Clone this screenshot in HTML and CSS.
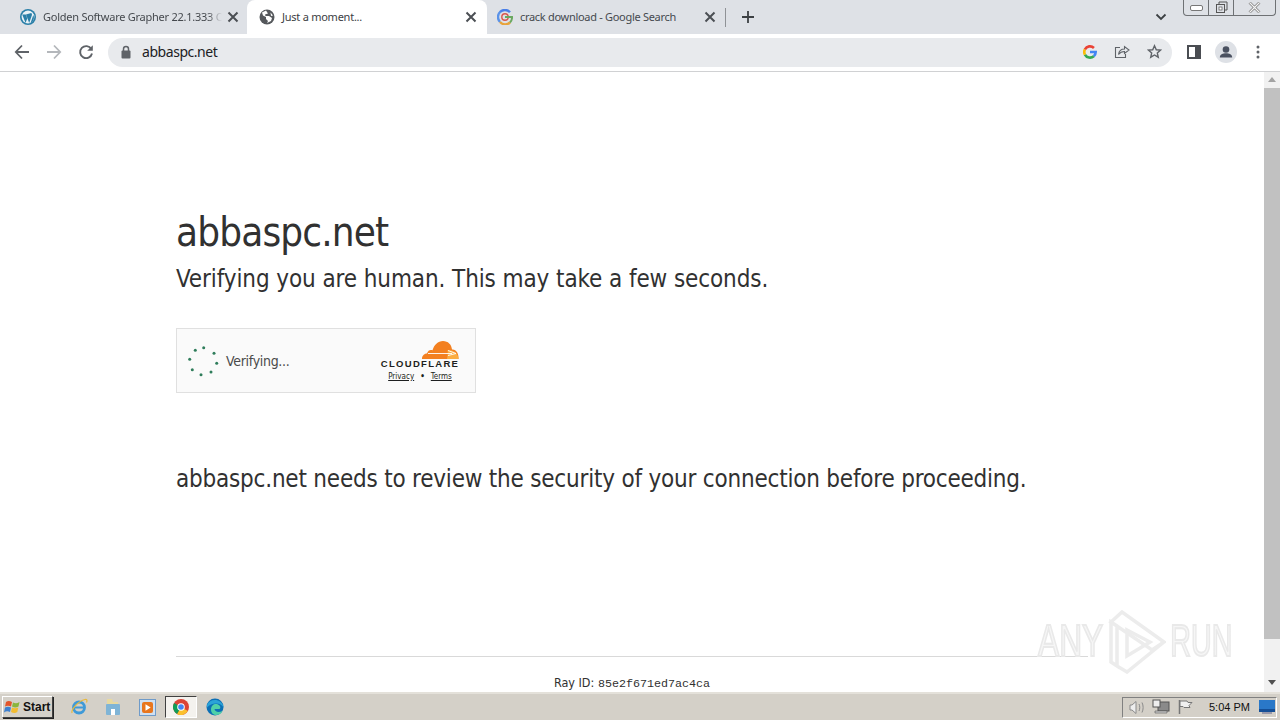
FILE: index.html
```html
<!DOCTYPE html>
<html lang="en">
<head>
  <meta charset="UTF-8" />
  <title>Just a moment...</title>
  <link rel="stylesheet" href="styles.css">
</head>
<body>
  <div class="tabstrip">
    <div class="tab tab-first">
      <svg class="favicon" viewBox="0 0 16 16"><circle cx="8" cy="8" r="8" fill="#2a7fa8"/><circle cx="8" cy="8" r="6.400" fill="#e9f2f7"/><path d="M2.200 5.500 5.600 14l1.600-4.600L5.800 5.500M6 5.500l3.200 8.600 2.600-7.600c.5-1.300 0-2-.6-2.600M13.300 6 10.500 14.200C13 13.400 15 9.500 13.300 6Z" fill="#2a7fa8"/></svg>
      <span class="tab-title">Golden Software Grapher 22.1.333 C</span>
      <svg class="tab-close" viewBox="0 0 16 16"><path d="m3.500 3.500 9 9m0-9-9 9" stroke="#4b4f54" stroke-width="2"/></svg>
    </div>
    <div class="tab tab-active">
      <svg class="favicon" viewBox="0 0 16 16"><circle cx="8" cy="8" r="7.500" fill="#55585c"/><path d="M7 1.500 3 3.500l1 3 3 1.500v2l2 2-1 2 4-2 1-3-3-2H6.500L6 5.500 9 4.500Z" fill="#fff"/><path d="M11.500 3.500 14 6.500l-2 .5Z" fill="#fff"/></svg>
      <span class="tab-title">Just a moment...</span>
      <svg class="tab-close" viewBox="0 0 16 16"><path d="m3.500 3.500 9 9m0-9-9 9" stroke="#4b4f54" stroke-width="2"/></svg>
    </div>
    <div class="tab tab-last">
      <svg class="favicon" viewBox="0 0 16 16" fill="none" stroke-width="2.400"><path d="M13 3.200A7 7 0 0 0 3 3" stroke="#4a7fe8"/><path d="M3.500 2.700A7 7 0 0 0 3 13" stroke="#5a92e8"/><path d="M3 13a7 7 0 0 0 10 .5" stroke="#e8a33a"/><circle cx="8" cy="8" r="3.200" stroke="#d9574c" stroke-width="1.400"/><path d="M8 8h7a7 7 0 0 1-2 5.500" stroke="#6aa860" stroke-width="2"/></svg>
      <span class="tab-title">crack download - Google Search</span>
      <svg class="tab-close" viewBox="0 0 16 16"><path d="m3.500 3.500 9 9m0-9-9 9" stroke="#4b4f54" stroke-width="2"/></svg>
    </div>
    <span class="tab-sep"></span>
    <svg class="new-tab" viewBox="0 0 14 14"><path d="M7 1v12M1 7h12" stroke="#3c4043" stroke-width="1.800"/></svg>
    <svg class="tab-search" viewBox="0 0 12 8"><path d="M1.500 1.500 6 6l4.500-4.500" fill="none" stroke="#3c4043" stroke-width="1.800"/></svg>
    <div class="window-controls">
      <span class="win-btn win-min"><svg width="13" height="6" viewBox="0 0 13 6"><rect x=".5" y=".5" width="12" height="5" rx="1.500" fill="#fff" stroke="#777"/></svg></span>
      <span class="win-btn win-max"><svg width="13" height="13" viewBox="0 0 13 13"><path d="M4 3V1h8v8h-2" fill="#dee1e6" stroke="#555"/><rect x="1.500" y="3.500" width="8" height="8" fill="#dee1e6" stroke="#555"/><rect x="4" y="6" width="3" height="3" fill="#fff" stroke="#555" stroke-width=".7"/></svg></span>
      <span class="win-btn win-close"><svg width="13" height="11" viewBox="0 0 13 11"><path d="M1.500.5 11.500 10.500M11.500.5 1.500 10.500" stroke="#777" stroke-width="2.600"/><path d="M1.500.5 11.500 10.500M11.500.5 1.500 10.500" stroke="#f4f4f4" stroke-width="1.200"/></svg></span>
    </div>
  </div>

  <div class="toolbar">
    <span class="tool"><svg width="16" height="16" viewBox="0 0 16 16"><path d="M15 8H2M8 1.500 1.800 8 8 14.500" fill="none" stroke="#5f6368" stroke-width="1.800"/></svg></span>
    <span class="tool"><svg width="16" height="16" viewBox="0 0 16 16"><path d="M1 8h13M8 1.500 14.200 8 8 14.500" fill="none" stroke="#b4b7bb" stroke-width="1.800"/></svg></span>
    <span class="tool"><svg width="16" height="16" viewBox="0 0 16 16"><path d="M13.300 5A6 6 0 1 0 14 9.500" fill="none" stroke="#5f6368" stroke-width="1.900"/><path d="M14.800 1.200v5.600H9.200Z" fill="#5f6368"/></svg></span>
    <div class="omnibox">
      <svg class="lock" viewBox="0 0 12 14"><path d="M3.500 6V4a2.500 2.500 0 0 1 5 0v2" fill="none" stroke="#5f6368" stroke-width="1.500"/><rect x="1.500" y="5.500" width="9" height="8" rx="1" fill="#5f6368"/></svg>
      <span class="url">abbaspc.net</span>
      <span class="omni-icon"><svg width="14" height="14" viewBox="0 0 16 16" fill="none" stroke-width="3"><path d="M8 8h6.500a6.500 6.500 0 0 1-2.200 4.800" stroke="#4285f4"/><path d="M12.300 12.800A6.500 6.500 0 0 1 2.200 11" stroke="#34a853"/><path d="M2.200 11a6.500 6.500 0 0 1 0-6" stroke="#fbbc05"/><path d="M2.200 5A6.500 6.500 0 0 1 12.500 3.400" stroke="#ea4335"/></svg></span>
      <span class="omni-icon"><svg width="16" height="15" viewBox="0 0 16 15" fill="none" stroke="#5f6368" stroke-width="1.100"><path d="M6 3.500H1.500v10h10V10"/><path d="M4.500 10.500C5 7 7.500 5 10.500 5V2.500L15 6l-4.500 3.500V7.500c-2.500 0-4.500 1-6 3Z"/></svg></span>
      <span class="omni-icon"><svg width="15" height="15" viewBox="0 0 16 16"><path d="m8 1.800 1.900 4.300 4.600.4-3.500 3 1 4.600L8 11.700l-4 2.400 1-4.600-3.500-3 4.600-.4Z" fill="none" stroke="#5f6368" stroke-width="1.500"/></svg></span>
    </div>
    <span class="tool"><svg width="14" height="14" viewBox="0 0 14 14"><rect x="1" y="1" width="12" height="12" fill="#fff" stroke="#4a4d52" stroke-width="2"/><rect x="8" y="1" width="5" height="12" fill="#4a4d52"/></svg></span>
    <span class="tool"><svg width="22" height="22" viewBox="0 0 22 22"><circle cx="11" cy="11" r="11" fill="#dee1e6"/><circle cx="11" cy="8.500" r="3.300" fill="#4a5160"/><path d="M4.800 16.500c0-3 3-4.200 6.200-4.200s6.200 1.200 6.200 4.200Z" fill="#4a5160"/></svg></span>
    <span class="tool"><svg width="4" height="14" viewBox="0 0 4 14" fill="#5f6368"><circle cx="2" cy="2" r="1.500"/><circle cx="2" cy="7" r="1.500"/><circle cx="2" cy="12" r="1.500"/></svg></span>
  </div>

  <div class="viewport">
    <div class="page">
      <main class="wrapper">
        <h1>abbaspc.net</h1>
        <h2>Verifying you are human. This may take a few seconds.</h2>
        <div class="widget">
          <svg class="spinner" viewBox="-16 -16 32 32" fill="#2f7d5b"><circle cx="-7.700" cy="-10.700" r="1.500"/><circle cx=".7" cy="-13.300" r="1.500"/><circle cx="11" cy="-7.700" r="1.500"/><circle cx="13.700" cy="2.300" r="1.500"/><circle cx="8" cy="11" r="1.500"/><circle cx="-2" cy="13.700" r="1.500"/><circle cx="-10.700" cy="8.700" r="1.500"/><circle cx="-13.300" cy="-1.700" r="1.500"/></svg>
          <span class="widget-text">Verifying...</span>
          <div class="cf-brand">
            <svg class="cf-cloud" viewBox="0 0 38 20"><path d="M1 19c-.2-3 2-5.500 5-5.500 1-3 3-4 5.500-3.200C13 5 17 1 22 1c5 0 8.500 3.500 9 8.500 4-.5 7 4 6.500 9.500Z" fill="#f38020"/><path d="M26 19c.5-3 1-6 .5-9 4-.5 11 2 11 9Z" fill="#fbad41"/><path d="M7 13.500h24M27 10.500l8 3-8 2" stroke="#fff" stroke-width=".9" fill="none"/></svg>
            <span class="cf-name">CLOUDFLARE</span>
            <span class="cf-links"><a>Privacy</a><b>&bull;</b><a>Terms</a></span>
          </div>
        </div>
        <p class="review">abbaspc.net needs to review the security of your connection before proceeding.</p>
        <footer class="footer">Ray ID: <code>85e2f671ed7ac4ca</code></footer>
      </main>
      <div class="watermark">
        <span class="wm-any">ANY</span>
        <svg class="wm-play" viewBox="0 0 58 64" fill="none" stroke="#ececec" stroke-width="3.500"><path d="M3 12v40l6 4V16ZM3 12 14 2l42 30-12 8ZM9 56l10 6 37-30"/><path d="M19 20 42 32 19 46Z"/></svg>
        <span class="wm-run">RUN</span>
      </div>
    </div>
    <div class="scrollbar">
      <span class="arrow arrow-up"></span>
      <span class="thumb"></span>
      <span class="arrow arrow-down"></span>
    </div>
  </div>

  <div class="taskbar">
    <button class="start">
      <svg width="18" height="16" viewBox="0 0 18 16"><path d="M2 3c2-1.500 4-1 6 0L7 7.500C5 6.500 3 6.500 1 7.500Z" fill="#e2552b"/><path d="M9 3.500c2 1 4 1 6.500-.5l-1 4.500C12 9 10 8.500 8 7.500Z" fill="#8ab53c"/><path d="M1 8.500c2-1 4-1 6 0L6 13c-2-1-4-1-6 .5Z" fill="#3d80d0"/><path d="M8 8.500c2 1 4 1 6.300 0l-1 4.500c-2 1.500-4.300 1-6.300 0Z" fill="#f2bc30"/></svg>
      Start
    </button>
    <span class="quick"><svg width="18" height="18" viewBox="0 0 18 18"><circle cx="9" cy="9.500" r="5.500" fill="none" stroke="#3f9ad8" stroke-width="2.800"/><path d="M4.500 9.500h9" stroke="#3f9ad8" stroke-width="2"/><path d="M2 15C1 12 8 3 15 1.500c2-.4 2.500 1 1.500 3" fill="none" stroke="#e8b93c" stroke-width="1.200"/></svg></span>
    <span class="quick"><svg width="16" height="18" viewBox="0 0 16 18"><path d="M2 1h5l1 3h5v4H2Z" fill="#e8d9a0"/><rect x="1" y="6" width="14" height="11" rx="1" fill="#7fb4d6"/><rect x="6" y="11" width="4" height="6" fill="#fff"/></svg></span>
    <span class="quick"><svg width="17" height="17" viewBox="0 0 17 17"><rect x=".5" y=".5" width="16" height="16" fill="#cfe0f2" stroke="#6f9bc9"/><rect x="3" y="3" width="11" height="11" rx="2" fill="#e8761e"/><path d="M6.500 5.200v6.600L11.700 8.500Z" fill="#fff"/></svg></span>
    <span class="quick quick-active"><svg width="16" height="16" viewBox="0 0 16 16"><circle cx="8" cy="8" r="8" fill="#db4437"/><path d="M8 8 14.900 12A8 8 0 0 1 4 15Z" fill="#fbc02d"/><path d="M8 8 4 15A8 8 0 0 1 1.100 4Z" fill="#0f9d58"/><circle cx="8" cy="8" r="3.800" fill="#fff"/><circle cx="8" cy="8" r="2.800" fill="#4285f4"/></svg></span>
    <span class="quick"><svg width="18" height="18" viewBox="0 0 18 18"><circle cx="9" cy="9" r="8.500" fill="#0c6fb5"/><path d="M5 11.500C5 7 9 5 12 6.500c2.500 1.200 3 3.500 1.500 4.500h-5c.3 2.500 3.500 4 8 2-1.500 3-4 4-6.500 4C7 17 5 14.500 5 11.500Z" fill="#4fd0a8"/><path d="M1 7c2-5 9-6.500 13.500-3 2 1.500 3 3.500 3 5.500-1.500-2.500-4-4-7-4C6 5.500 3.500 7 1 9.500Z" fill="#2aa3d8"/></svg></span>
    <div class="tray">
      <svg width="18" height="15" viewBox="0 0 18 15" fill="none" stroke="#8a8a8a"><path d="M4 5H2v5h2l4 3.500v-12Z" fill="#eee"/><path d="M11 4c1 2 1 5 0 7M14 2.500c1.500 3 1.500 7 0 10"/></svg>
      <svg width="18" height="16" viewBox="0 0 18 16"><rect x="6" y="3" width="11" height="9" fill="#8a8a8a" stroke="#555"/><rect x="1" y="1" width="7" height="7" fill="#eee" stroke="#555"/><path d="M3 12h12v2H3Z" fill="#ccc" stroke="#555" stroke-width=".6"/></svg>
      <svg width="18" height="16" viewBox="0 0 18 16" fill="#f0f0f0" stroke="#777"><path d="M3.500 1v14" stroke-width="1.500"/><path d="M4 2h7l1 1.500h4l-3 3 1 2H8L7 7.500H4Z"/></svg>
      <span class="clock">5:04 PM</span>
      <svg width="16" height="14" viewBox="0 0 16 14"><rect width="16" height="12" fill="#2a78c8"/><rect y="9" width="16" height="3" fill="#154f96"/><rect x="3" y="12" width="10" height="2" fill="#99a"/></svg>
    </div>
  </div>
</body>
</html>
```

FILE: styles.css
```css
* {
  margin: 0;
  padding: 0;
  box-sizing: border-box;
}
html, body {
  height: 720px;
  overflow: hidden;
}
body {
  display: flex;
  flex-direction: column;
  background: #fff;
  font-family: 'Noto Sans', sans-serif;
  color: #3c4043;
}
.tabstrip {
  height: 34px;
  background: #dee1e6;
  display: flex;
  align-items: center;
  padding: 0 4px 0 8px;
}
.tab {
  height: 34px;
  display: flex;
  align-items: center;
  gap: 7px;
  font-size: 11px;
  letter-spacing: -0.25px;
  color: #45494e;
}
.tab-first {
  width: 239px;
  padding: 0 7px 0 12px;
}
.tab-active {
  width: 240px;
  padding: 0 8px 0 12px;
  background: #fff;
  border-radius: 8px 8px 0 0;
  color: #3c4043;
}
.tab-last {
  width: 238px;
  padding: 0 7px 0 10px;
  letter-spacing: -0.3px;
}
.favicon {
  width: 16px;
  height: 16px;
  flex: none;
}
.tab-title {
  flex: 1;
  padding-bottom: 2px;
  white-space: nowrap;
}
.tab-first .tab-title {
  margin-right: -4px;
  -webkit-mask-image: linear-gradient(to right, #000 92%, transparent 100%);
  mask-image: linear-gradient(to right, #000 92%, transparent 100%);
}
.tab-close {
  width: 16px;
  height: 16px;
  flex: none;
}
.tab-sep {
  width: 1px;
  height: 19px;
  background: #8f9296;
}
.new-tab {
  width: 14px;
  height: 14px;
  margin-left: 15px;
}
.tab-search {
  width: 12px;
  height: 8px;
  margin-left: 400px;
}
.window-controls {
  margin-left: 16px;
  width: 93px;
  height: 16px;
  align-self: flex-start;
  display: flex;
  border: 1px solid #6e7174;
  border-top: none;
  border-radius: 0 0 4px 4px;
}
.win-btn {
  display: flex;
  align-items: center;
  justify-content: center;
  border-right: 1px solid #6e7174;
}
.win-min { width: 25px; }
.win-max { width: 25px; }
.win-close { flex: 1; border-right: none; }

.toolbar {
  height: 38px;
  background: #fff;
  border-bottom: 1px solid #d0d1d3;
  display: flex;
  align-items: center;
  padding: 0 6px;
}
.tool {
  width: 32px;
  height: 32px;
  flex: none;
  margin-bottom: 2px;
  display: flex;
  align-items: center;
  justify-content: center;
}
.omnibox {
  flex: 1;
  height: 29px;
  margin: 0 6px;
  padding: 0 2px 0 12px;
  background: #e8eaed;
  border-radius: 15px;
  display: flex;
  align-items: center;
}
.lock {
  width: 12px;
  height: 14px;
  margin-bottom: 2px;
}
.url {
  flex: 1;
  margin-left: 10px;
  padding-bottom: 2px;
  font-size: 14px;
  letter-spacing: -0.45px;
  color: #202124;
}
.omni-icon {
  width: 32px;
  margin-bottom: 2px;
  display: flex;
  justify-content: center;
}

.viewport {
  height: 620px;
  display: flex;
  overflow: hidden;
}
.page {
  position: relative;
  flex: 1;
  overflow: hidden;
  font-family: 'DejaVu Sans Condensed', 'DejaVu Sans', sans-serif;
  color: #313131;
}
.wrapper {
  width: 912px;
  margin: 129px auto 0;
}
h1 {
  padding-top: 1px;
  font-size: 40px;
  line-height: 60px;
  font-weight: 500;
  letter-spacing: -0.85px;
}
h2 {
  font-size: 24px;
  line-height: 34px;
  font-weight: 400;
  letter-spacing: -0.1px;
}
.widget {
  width: 300px;
  height: 65px;
  margin-top: 32px;
  padding: 0 16px 0 10px;
  background: #fafafa;
  border: 1px solid #e0e0e0;
  display: flex;
  align-items: center;
}
.spinner {
  width: 32px;
  height: 32px;
}
.widget-text {
  flex: 1;
  margin-left: 7px;
  font-size: 14px;
  letter-spacing: -0.3px;
  color: #4a4a4a;
}
.cf-brand {
  width: 78px;
  display: flex;
  flex-direction: column;
  align-items: center;
  color: #1d1f20;
}
.cf-cloud {
  width: 38px;
  height: 20px;
  margin-left: 40px;
  margin-bottom: -1px;
}
.cf-name {
  font-family: 'Liberation Sans', sans-serif;
  font-size: 9.500px;
  line-height: 10px;
  font-weight: bold;
  letter-spacing: 1.300px;
  white-space: nowrap;
}
.cf-links {
  margin-top: 3px;
  display: flex;
  gap: 6px;
  font-size: 8px;
  line-height: 9px;
}
.cf-links a {
  text-decoration: underline;
}
.review {
  margin-top: 68px;
  font-size: 24px;
  line-height: 36px;
  letter-spacing: -0.21px;
}
.footer {
  margin-top: 159px;
  padding-top: 16px;
  border-top: 1px solid #d9d9d9;
  text-align: center;
  font-size: 12.500px;
  line-height: 20px;
}
.footer code {
  font-family: 'Liberation Mono', monospace;
  font-size: 11.700px;
}
.watermark {
  position: absolute;
  left: 1038px;
  top: 538px;
  width: 196px;
  height: 64px;
  font-family: 'Liberation Sans', sans-serif;
  font-size: 44px;
}
.wm-any, .wm-run {
  position: absolute;
  top: 6px;
  line-height: 50px;
  color: #f6f6f6;
  -webkit-text-stroke: 2px #e9e9e9;
}
.wm-any {
  left: 0;
  transform-origin: left;
  transform: scaleX(0.72);
}
.wm-run {
  right: 2px;
  transform-origin: right;
  transform: scaleX(0.65);
}
.wm-play {
  position: absolute;
  left: 70px;
  top: 0;
  width: 58px;
  height: 64px;
}
.scrollbar {
  width: 16px;
  flex: none;
  background: #f1f1f1;
  display: flex;
  flex-direction: column;
  align-items: center;
}
.arrow {
  width: 0;
  height: 0;
  flex: none;
  border-left: 4px solid transparent;
  border-right: 4px solid transparent;
}
.arrow-up {
  margin: 5px 0 6px;
  border-bottom: 5px solid #a3a3a3;
}
.thumb {
  width: 100%;
  height: 551px;
  background: #c1c1c1;
}
.arrow-down {
  margin-top: 41px;
  border-top: 5px solid #505050;
}

.taskbar {
  height: 28px;
  background: #d4d0c8;
  border-top: 2px solid #e4e1da;
  display: flex;
  align-items: center;
  padding: 0 3px 0 2px;
}
.start {
  width: 51px;
  height: 22px;
  margin-right: 9px;
  background: #d4d0c8;
  border: 1px solid;
  border-color: #fff #404040 #404040 #fff;
  box-shadow: 1px 1px 0 #222;
  display: flex;
  align-items: center;
  gap: 1px;
  padding-left: 1px;
  font-family: 'Liberation Sans', sans-serif;
  font-size: 12px;
  font-weight: bold;
  color: #111;
}
.quick {
  width: 34px;
  height: 22px;
  flex: none;
  display: flex;
  align-items: center;
  justify-content: center;
}
.quick-active {
  width: 32px;
  margin: 0 1px;
  background: #f4f2ee;
  border: 1px solid;
  border-color: #404040 #fff #fff #404040;
}
.tray {
  margin-left: auto;
  width: 155px;
  height: 21px;
  border: 1px solid;
  border-color: #808080 #fff #fff #808080;
  display: flex;
  align-items: center;
  gap: 6px;
  padding: 0 1px 0 5px;
}
.clock {
  flex: 1;
  padding-left: 9px;
  font-family: 'Liberation Sans', sans-serif;
  font-size: 11px;
  color: #111;
}
```
